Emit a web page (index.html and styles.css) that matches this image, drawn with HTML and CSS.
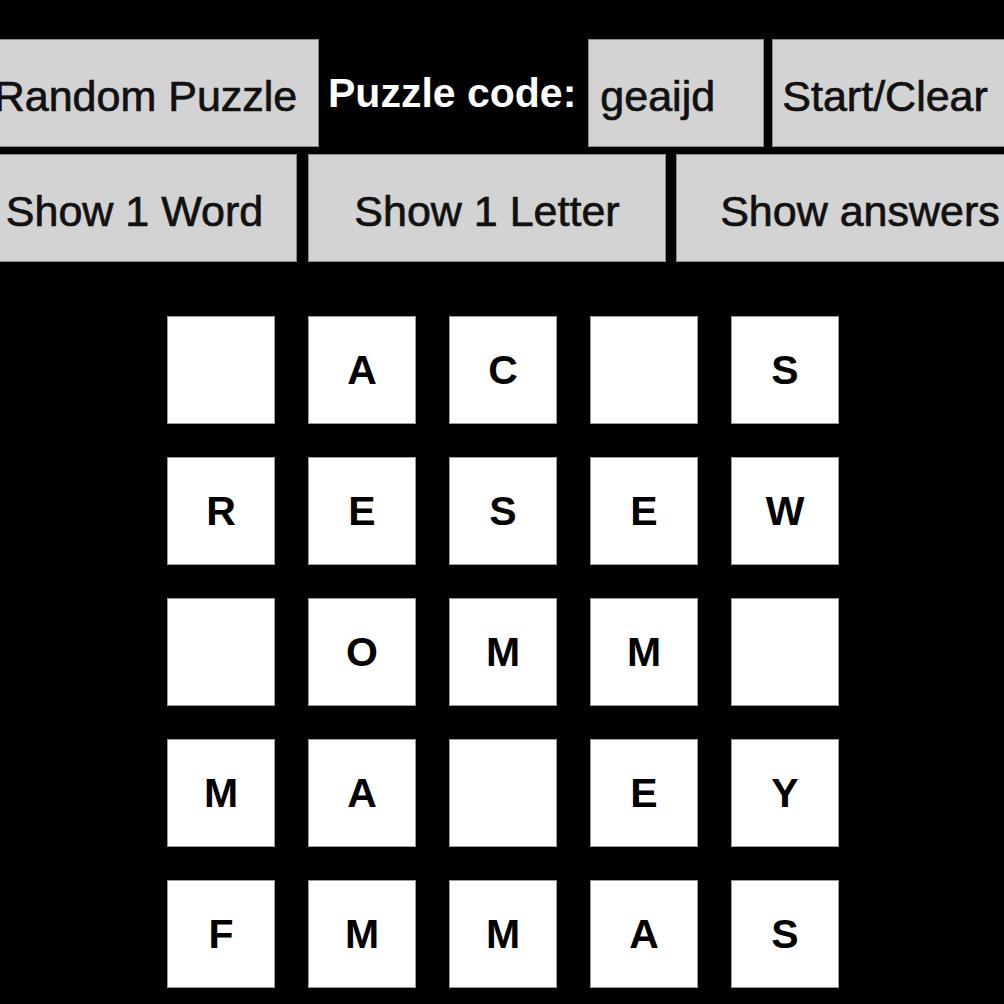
FILE: index.html
```html
<!DOCTYPE html>
<html lang="en">
<head>
  <meta charset="UTF-8">
  <title>Word Grid Puzzle</title>
  <link rel="stylesheet" href="styles.css">
</head>
<body>
  <div class="toolbar">
    <div class="row row-top">
      <button class="btn btn-random">Random Puzzle</button>
      <label class="code-label" for="code">Puzzle code:</label>
      <input class="code-input" id="code" type="text" value="geaijd">
      <button class="btn btn-start">Start/Clear</button>
    </div>
    <div class="row row-hints">
      <button class="btn btn-word">Show 1 Word</button>
      <button class="btn btn-letter">Show 1 Letter</button>
      <button class="btn btn-answers">Show answers</button>
    </div>
  </div>

  <div class="board">
    <div class="cell"></div>
    <div class="cell">A</div>
    <div class="cell">C</div>
    <div class="cell"></div>
    <div class="cell">S</div>

    <div class="cell">R</div>
    <div class="cell">E</div>
    <div class="cell">S</div>
    <div class="cell">E</div>
    <div class="cell">W</div>

    <div class="cell"></div>
    <div class="cell">O</div>
    <div class="cell">M</div>
    <div class="cell">M</div>
    <div class="cell"></div>

    <div class="cell">M</div>
    <div class="cell">A</div>
    <div class="cell"></div>
    <div class="cell">E</div>
    <div class="cell">Y</div>

    <div class="cell">F</div>
    <div class="cell">M</div>
    <div class="cell">M</div>
    <div class="cell">A</div>
    <div class="cell">S</div>
  </div>
</body>
</html>
```

FILE: styles.css
```css
html, body {
  margin: 0;
  padding: 0;
  background: #000;
  font-family: "Liberation Sans", Arial, sans-serif;
  overflow: hidden;
  height: 100%;
}

.toolbar {
  padding-top: 39px;
  margin-left: -28px;
}

.row {
  display: flex;
  align-items: stretch;
  height: 108px;
}

.row-hints {
  margin-top: 7px;
}

.btn,
.code-input {
  flex-shrink: 0;
  box-sizing: border-box;
  height: 108px;
  margin: 0;
  background: #d3d3d3;
  color: #111;
  border: 1px solid #8a8a8a;
  border-radius: 0;
  font-family: inherit;
  font-size: 43px;
  -webkit-text-stroke: 0.7px #111;
  padding: 7px 0 0;
}

.btn {
  text-align: center;
}

.btn-random {
  width: 347px;
}

.code-label {
  flex-shrink: 0;
  display: flex;
  align-items: center;
  margin: 0 12px 0 9px;
  color: #fff;
  font-weight: bold;
  font-size: 41px;
  white-space: nowrap;
}

.code-input {
  width: 176px;
  padding-left: 11px;
  outline: none;
}

.btn-start {
  width: 260px;
  margin-left: 8px;
  text-align: left;
  padding-left: 9px;
}

.btn-word {
  width: 325px;
}

.btn-letter {
  width: 358px;
  margin-left: 11px;
}

.btn-answers {
  width: 368px;
  margin-left: 10px;
}

.board {
  display: grid;
  grid-template-columns: repeat(5, 108px);
  grid-auto-rows: 108px;
  gap: 33px;
  justify-content: center;
  margin-top: 54px;
  padding-left: 2px;
}

.cell {
  box-sizing: border-box;
  background: #fff;
  border: 1px solid #9a9a9a;
  display: flex;
  align-items: center;
  justify-content: center;
  color: #000;
  font-weight: bold;
  font-size: 41px;
}
```
